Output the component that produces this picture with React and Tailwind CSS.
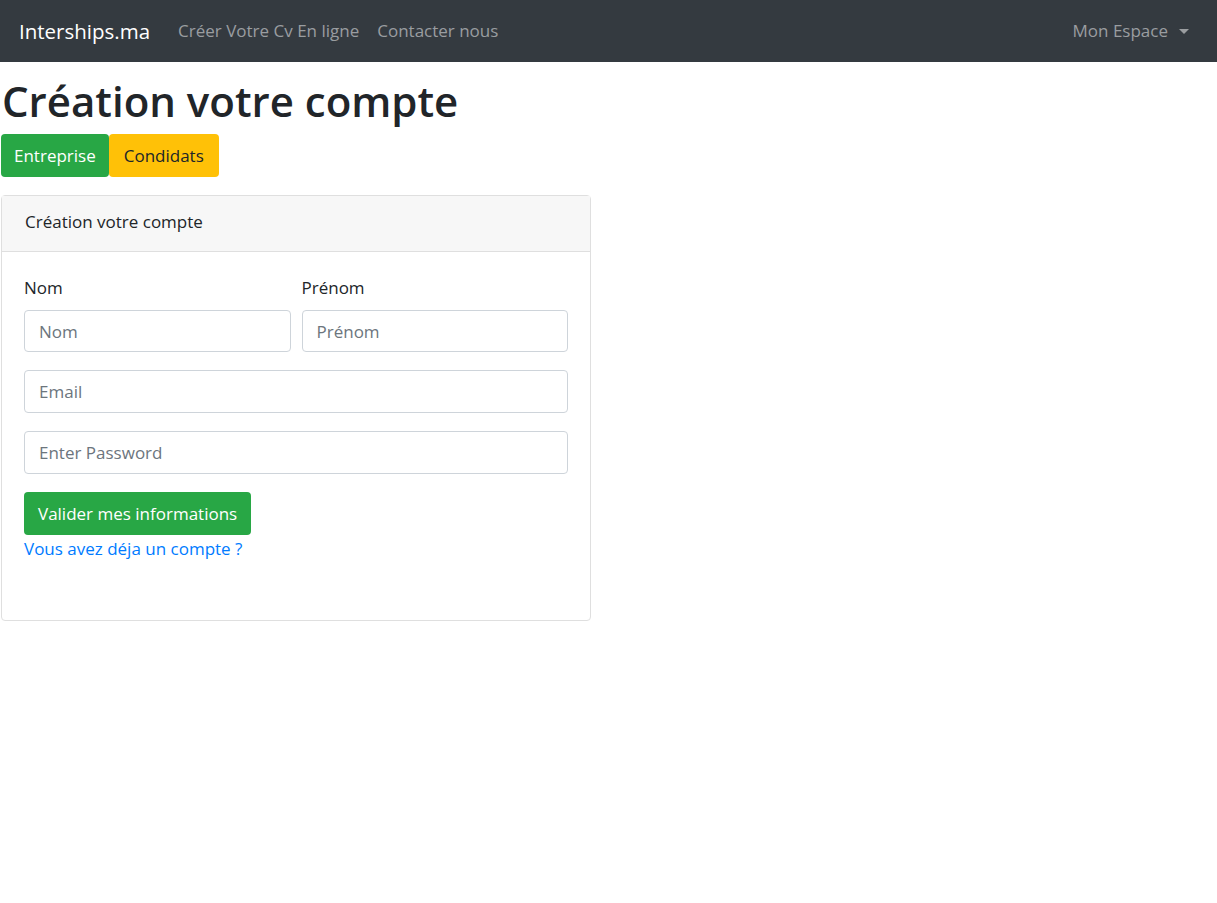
import React from "react";

const font = { fontFamily: '"Open Sans", "Noto Sans", Arial, sans-serif' };

const Navbar = () => (
  <nav className="flex items-center justify-between h-[62px] bg-[#343a40] pl-[19px] pr-[28px]">
    <div className="flex items-center">
      <a className="text-[20.5px] text-white mr-[28px]">Interships.ma</a>
      <a className="text-[17px] text-[#9a9da0] mr-[18px]">Créer Votre Cv En ligne</a>
      <a className="text-[17px] text-[#9a9da0]">Contacter nous</a>
    </div>
    <a className="flex items-center text-[17px] text-[#9a9da0]">
      Mon Espace
      <span className="ml-[11px] mt-[1px] border-t-[5px] border-x-[5px] border-t-[#9a9da0] border-x-transparent" />
    </a>
  </nav>
);

const Input = ({ placeholder, className = "" }) => (
  <input
    placeholder={placeholder}
    className={`h-[42px] w-full px-[14px] text-[17px] text-[#495057] placeholder:text-[#6c757d] border border-[#ced4da] rounded-[4px] outline-none ${className}`}
  />
);

export default function App() {
  return (
    <div className="min-h-screen bg-white text-[#212529]" style={font}>
      <Navbar />
      <div className="pl-px">
        <h1 className="text-[42px] font-semibold leading-[48px] mt-[15px] mb-[9px] pl-px">Création votre compte</h1>
        <div className="flex">
          <button className="h-[43px] px-[13px] text-[17px] text-white bg-[#28a745] rounded-[4px]">Entreprise</button>
          <button className="h-[43px] px-[15px] text-[17px] text-[#212529] bg-[#ffc107] rounded-[4px]">Condidats</button>
        </div>
        <div className="w-[590px] mt-[18px] border border-[#dfdfdf] rounded-[4px]">
          <div className="h-[56px] flex items-center px-[23px] pb-[3px] bg-[#f7f7f7] border-b border-[#dfdfdf] text-[17px]">
            Création votre compte
          </div>
          <div className="px-[22px] pt-[24px] pb-[59px]">
            <div className="grid grid-cols-2 gap-x-[11px]">
              <div>
                <label className="block text-[17px] leading-[24px] mb-[10px]">Nom</label>
                <Input placeholder="Nom" />
              </div>
              <div>
                <label className="block text-[17px] leading-[24px] mb-[10px]">Prénom</label>
                <Input placeholder="Prénom" />
              </div>
            </div>
            <Input placeholder="Email" className="mt-[18px] h-[43px]" />
            <Input placeholder="Enter Password" className="mt-[18px] h-[43px]" />
            <button className="mt-[18px] h-[43px] px-[14px] text-[17px] text-white bg-[#28a745] rounded-[4px]">
              Valider mes informations
            </button>
            <div className="mt-[2px]">
              <a className="text-[17px] text-[#007bff] leading-[24px]">Vous avez déja un compte ?</a>
            </div>
          </div>
        </div>
      </div>
    </div>
  );
}
